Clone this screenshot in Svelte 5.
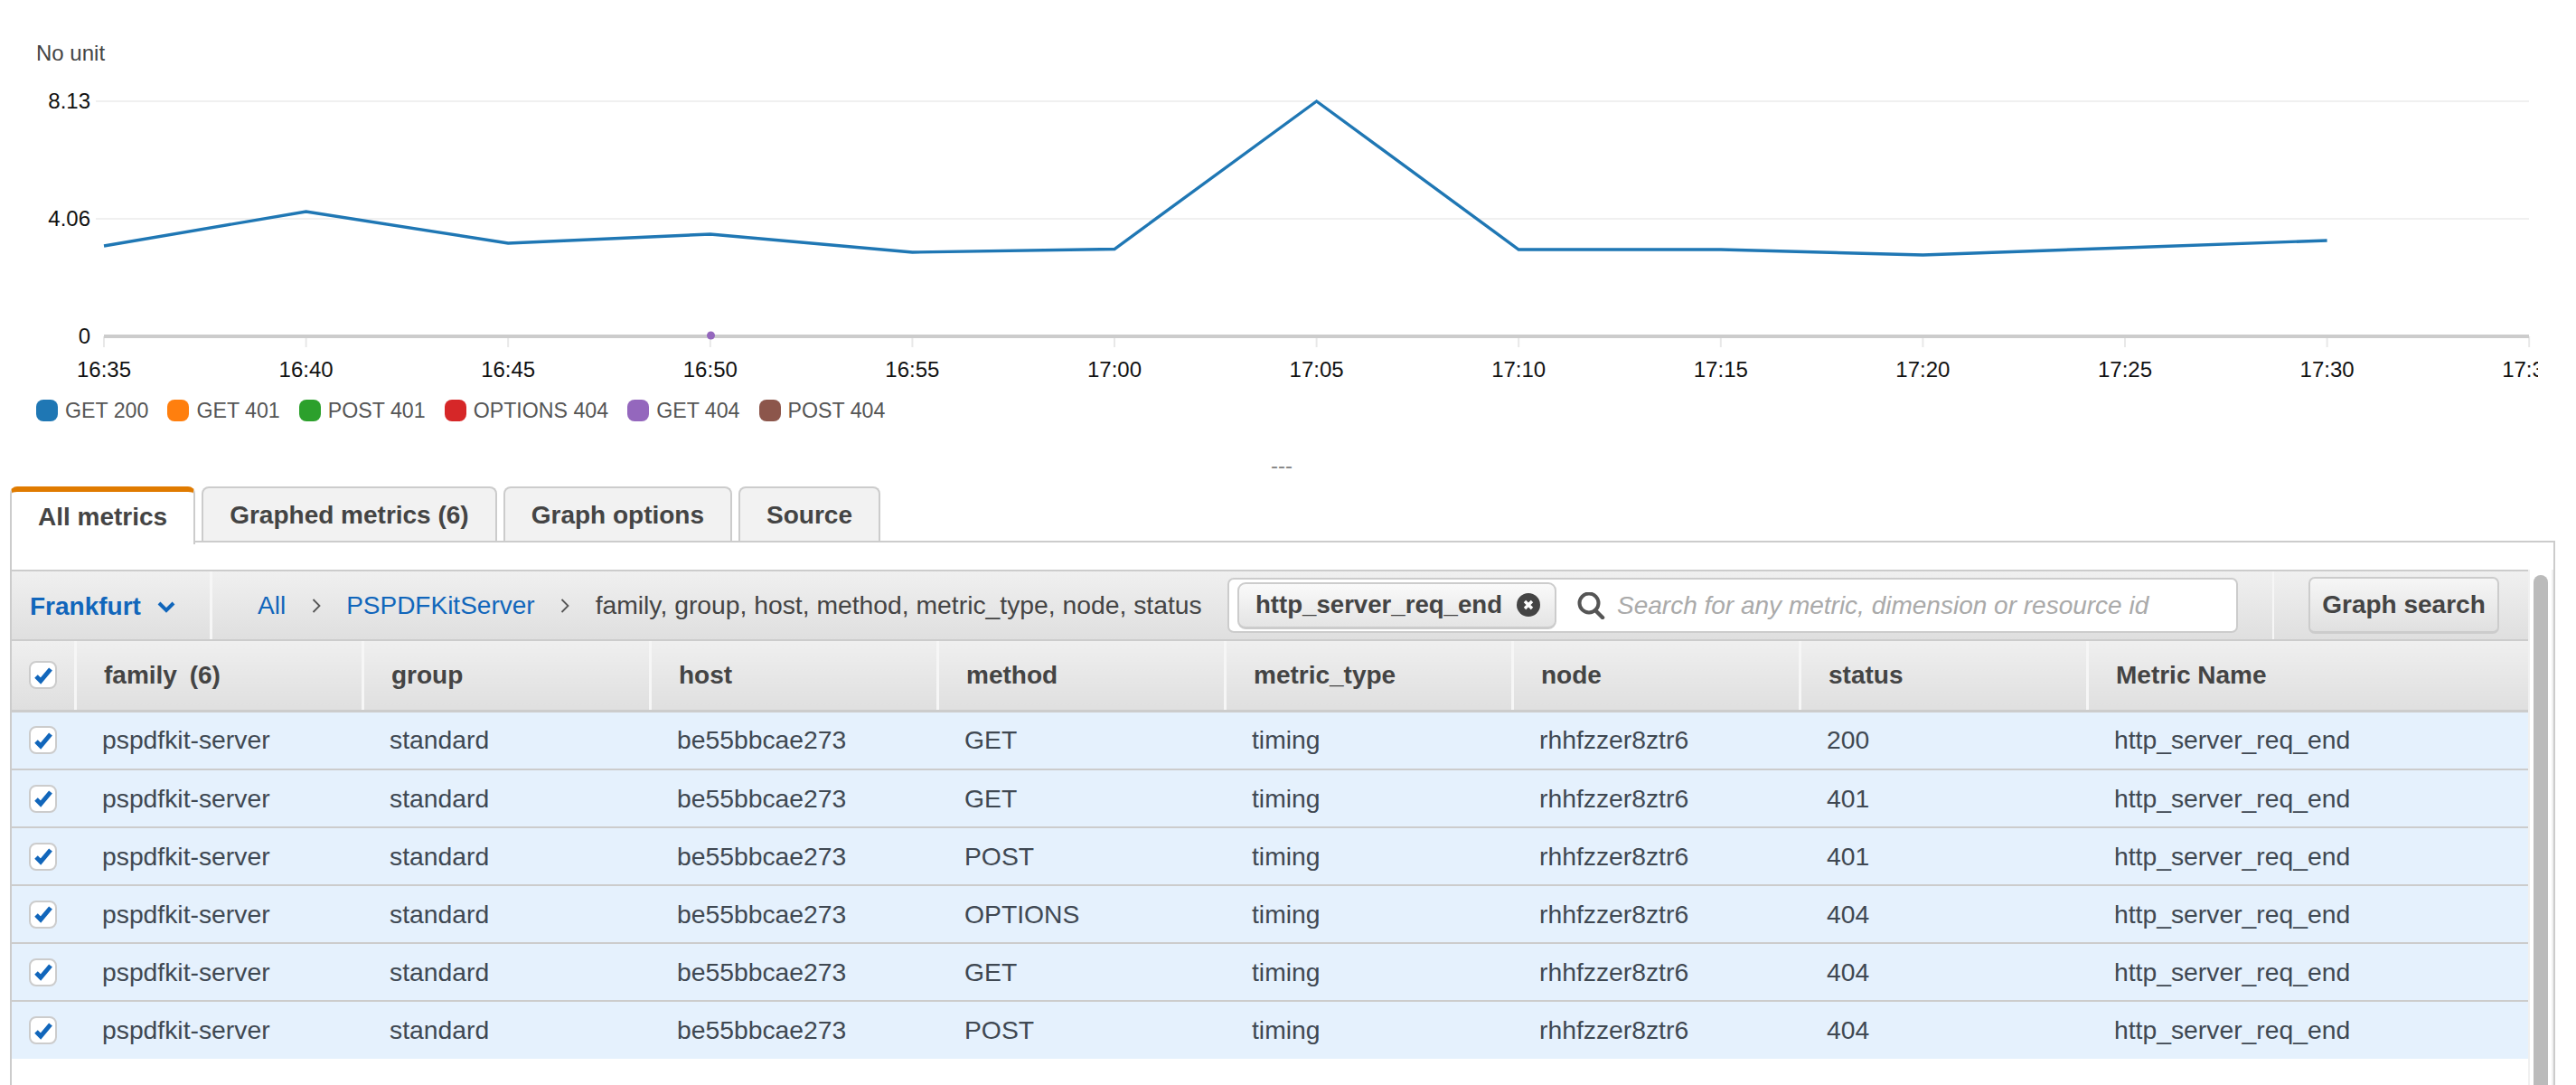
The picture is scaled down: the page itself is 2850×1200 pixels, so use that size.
<script>
	const points = [272, 234, 269, 259, 279, 275.5, 112, 276, 276, 282, 274, 266];
	const step = 223.6;
	const x0 = 115;
	const ticks = ['16:35', '16:40', '16:45', '16:50', '16:55', '17:00', '17:05', '17:10', '17:15', '17:20', '17:25', '17:30', '17:35'];
	const line = points.map((y, i) => `${x0 + i * step},${y}`).join(' ');

	const legend = [
		{ label: 'GET 200', color: '#1f77b4' },
		{ label: 'GET 401', color: '#ff7f0e' },
		{ label: 'POST 401', color: '#2ca02c' },
		{ label: 'OPTIONS 404', color: '#d62728' },
		{ label: 'GET 404', color: '#9467bd' },
		{ label: 'POST 404', color: '#8c564b' }
	];

	const tabs = ['All metrics', 'Graphed metrics (6)', 'Graph options', 'Source'];
	const columns = ['group', 'host', 'method', 'metric_type', 'node', 'status', 'Metric Name'];

	const rows = [
		['GET', '200'],
		['GET', '401'],
		['POST', '401'],
		['OPTIONS', '404'],
		['GET', '404'],
		['POST', '404']
	];
</script>

<div class="page">
	<svg class="chart" width="2808" height="430" viewBox="0 0 2808 430">
		<text class="unit" x="40" y="67">No unit</text>

		<line class="grid" x1="106" y1="112" x2="2798" y2="112" />
		<line class="grid" x1="106" y1="242" x2="2798" y2="242" />
		<text class="label" x="100" y="120" text-anchor="end">8.13</text>
		<text class="label" x="100" y="250" text-anchor="end">4.06</text>
		<text class="label" x="100" y="380" text-anchor="end">0</text>

		{#each ticks as tick, i}
			<line class="tick" x1={x0 + i * step} y1="372" x2={x0 + i * step} y2="384" />
			<text class="label" x={x0 + i * step} y="417" text-anchor="middle">{tick}</text>
		{/each}
		<line class="axis" x1="115" y1="372" x2="2798" y2="372" />
		<circle cx="786.5" cy="371" r="4.5" fill="#9467bd" />
		<polyline class="series" points={line} />
	</svg>

	<div class="legend">
		{#each legend as item}
			<div class="legend-item">
				<span class="swatch" style="background: {item.color}"></span>
				{item.label}
			</div>
		{/each}
	</div>

	<div class="handle">---</div>

	<div class="tabs">
		{#each tabs as tab, i}
			<div class="tab" class:active={i === 0}>{tab}</div>
		{/each}
	</div>

	<div class="panel">
		<div class="content">
			<div class="toolbar">
				<div class="region">
					Frankfurt
					<svg width="20" height="14" viewBox="0 0 20 14">
						<path d="M2 3l8 8 8-8" fill="none" stroke="#1166bb" stroke-width="4" />
					</svg>
				</div>
				<div class="crumbs">
					<span class="link">All</span>
					<svg width="10" height="20" viewBox="0 0 10 20">
						<path d="M1.5 3l7 7-7 7" fill="none" stroke="#555" stroke-width="1.8" />
					</svg>
					<span class="link">PSPDFKitServer</span>
					<svg width="10" height="20" viewBox="0 0 10 20">
						<path d="M1.5 3l7 7-7 7" fill="none" stroke="#555" stroke-width="1.8" />
					</svg>
					<span class="dimensions">family, group, host, method, metric_type, node, status</span>
				</div>
				<div class="search">
					<div class="token">
						http_server_req_end
						<svg width="26" height="26" viewBox="0 0 26 26">
							<circle cx="13" cy="13" r="13" fill="#444" />
							<path d="M9 9l8 8M17 9l-8 8" stroke="#fff" stroke-width="3.4" />
						</svg>
					</div>
					<svg class="search-icon" width="31" height="30" viewBox="0 0 31 30">
						<circle cx="13" cy="12" r="10.5" fill="none" stroke="#555" stroke-width="4" />
						<path d="M20 20l8 8" stroke="#555" stroke-width="4.5" stroke-linecap="round" />
					</svg>
					<span class="placeholder">Search for any metric, dimension or resource id</span>
				</div>
				<div class="actions">
					<button class="graph-search">Graph search</button>
				</div>
			</div>

			<table>
				<colgroup>
					<col class="col-check" />
					{#each Array(7) as _}
						<col class="col-data" />
					{/each}
					<col />
				</colgroup>
				<thead>
					<tr>
						<th class="check-cell">
							<span class="check">
								<svg width="22" height="20" viewBox="0 0 22 20">
									<path d="M3 11l5 5 11-13" fill="none" stroke="#1166bb" stroke-width="5" />
								</svg>
							</span>
						</th>
						<th>family <span class="count">(6)</span></th>
						{#each columns as col}
							<th>{col}</th>
						{/each}
					</tr>
				</thead>
				<tbody>
					{#each rows as row}
						<tr>
							<td class="check-cell">
								<span class="check">
									<svg width="22" height="20" viewBox="0 0 22 20">
										<path d="M3 11l5 5 11-13" fill="none" stroke="#1166bb" stroke-width="5" />
									</svg>
								</span>
							</td>
							<td>pspdfkit-server</td>
							<td>standard</td>
							<td>be55bbcae273</td>
							<td>{row[0]}</td>
							<td>timing</td>
							<td>rhhfzzer8ztr6</td>
							<td>{row[1]}</td>
							<td>http_server_req_end</td>
						</tr>
					{/each}
				</tbody>
			</table>
		</div>

		<div class="scrollbar">
			<div class="thumb"></div>
		</div>
	</div>
</div>

<style>
	:global(body) {
		margin: 0;
		background: #fff;
	}

	.page {
		width: 2850px;
		height: 1200px;
		overflow: hidden;
		font-family: 'Liberation Sans', Arial, sans-serif;
		color: #444;
	}

	.chart {
		display: block;
	}

	.unit {
		font-size: 24px;
		fill: #444;
	}

	.label {
		font-size: 24px;
		fill: #111;
	}

	.grid {
		stroke: #f0f0f0;
		stroke-width: 2;
	}

	.tick {
		stroke: #e8e8e8;
		stroke-width: 2;
	}

	.axis {
		stroke: #ccc;
		stroke-width: 4;
	}

	.series {
		fill: none;
		stroke: #1f77b4;
		stroke-width: 3.4;
	}

	.legend {
		display: flex;
		align-items: center;
		gap: 21px;
		height: 48px;
		padding-left: 40px;
		font-size: 23.2px;
		color: #555;
	}

	.legend-item {
		display: flex;
		align-items: center;
		gap: 8px;
	}

	.swatch {
		width: 24px;
		height: 24px;
		border-radius: 8px;
	}

	.handle {
		height: 60px;
		padding-top: 21px;
		box-sizing: border-box;
		text-align: center;
		font-size: 24px;
		line-height: 32px;
		color: #888;
		margin-left: -14px;
	}

	.tabs {
		display: flex;
		gap: 7px;
		height: 62px;
		margin-left: 11px;
	}

	.tab {
		box-sizing: border-box;
		height: 60px;
		padding: 0 29px;
		font-size: 28px;
		font-weight: bold;
		line-height: 59px;
		background: #f2f2f2;
		border: 2px solid #ccc;
		border-bottom: 0;
		border-radius: 8px 8px 0 0;
	}

	.tab.active {
		height: 64px;
		position: relative;
		z-index: 1;
		background: #fff;
		border-top: 6px solid #e07b00;
		border-bottom: 0;
		line-height: 55px;
	}

	.panel {
		box-sizing: border-box;
		display: flex;
		width: 2816px;
		height: 640px;
		margin-left: 11px;
		margin-top: -2px;
		padding-top: 30px;
		border: 2px solid #ccc;
		border-bottom: 0;
	}

	.content {
		width: 2784px;
		flex: none;
	}

	.toolbar {
		box-sizing: border-box;
		display: flex;
		align-items: stretch;
		height: 79px;
		font-size: 28px;
		background: linear-gradient(#f0f0f0, #dfdfdf);
		border-top: 2px solid #ccc;
		border-bottom: 2px solid #ccc;
	}

	.region {
		box-sizing: border-box;
		flex: none;
		display: flex;
		align-items: center;
		gap: 18px;
		width: 222px;
		padding: 2px 0 0 20px;
		font-size: 28px;
		font-weight: bold;
		color: #1166bb;
		border-right: 3px solid #f6f6f6;
	}

	.crumbs {
		display: flex;
		align-items: center;
		gap: 28.5px;
		padding-left: 50px;
		white-space: nowrap;
	}

	.dimensions {
		font-size: 28.3px;
	}

	.search {
		box-sizing: border-box;
		display: flex;
		align-items: center;
		width: 1118px;
		height: 61px;
		align-self: center;
		margin-left: auto;
		padding-left: 9px;
		background: #fff;
		border: 2px solid #ccc;
		border-radius: 7px;
		white-space: nowrap;
	}

	.link {
		color: #1166bb;
	}

	.token {
		box-sizing: border-box;
		display: flex;
		align-items: center;
		gap: 16px;
		height: 52px;
		padding: 0 16px 0 18px;
		font-size: 27.6px;
		font-weight: bold;
		background: linear-gradient(#fafafa, #e4e4e4);
		border: 2px solid #ccc;
		border-bottom-width: 3px;
		border-radius: 9px;
	}

	.search-icon {
		margin-left: 23px;
		margin-right: 13px;
	}

	.placeholder {
		font-size: 28px;
		font-style: italic;
		color: #aaa;
	}

	.actions {
		flex: none;
		box-sizing: border-box;
		display: flex;
		align-items: center;
		width: 283px;
		margin-left: 38px;
		padding-left: 38px;
		border-left: 2px solid #f6f6f6;
	}

	.graph-search {
		box-sizing: border-box;
		width: 211px;
		height: 63px;
		padding: 0;
		font-family: inherit;
		font-size: 28px;
		font-weight: bold;
		color: #444;
		background: linear-gradient(#f6f6f6, #e0e0e0);
		border: 2px solid #ccc;
		border-bottom-width: 3px;
		border-radius: 7px;
	}

	table {
		width: 100%;
		table-layout: fixed;
		border-collapse: collapse;
	}

	.col-check {
		width: 70px;
	}

	.col-data {
		width: 318px;
	}

	th {
		box-sizing: border-box;
		height: 77px;
		padding: 0 0 0 30.5px;
		font-size: 28px;
		font-weight: bold;
		text-align: left;
		color: #444;
		background: linear-gradient(#efefef, #dfdfdf);
		border-bottom: 3px solid #ccc;
		border-left: 3px solid #f6f6f6;
	}

	th.check-cell {
		border-left: 0;
	}

	.count {
		margin-left: 6px;
	}

	td {
		box-sizing: border-box;
		height: 64px;
		padding: 0 0 0 30px;
		font-size: 28.3px;
		color: #3f4852;
		background: #e5f1fd;
		border-bottom: 2px solid #ccc;
	}

	tbody tr:first-child td {
		height: 65px;
	}

	tbody tr:last-child td {
		border-bottom: 0;
	}

	.check-cell {
		padding: 0 0 0 19px;
		line-height: 0;
	}

	.check {
		box-sizing: border-box;
		display: inline-flex;
		align-items: center;
		justify-content: center;
		width: 31px;
		height: 31px;
		background: #fff;
		border: 2px solid #ccc;
		border-radius: 8px;
	}

	.scrollbar {
		flex: 1;
		display: flex;
		justify-content: center;
		padding-top: 6px;
		background: #fff;
		border-left: 2px solid #f0f0f0;
		border-right: 2px solid #f0f0f0;
	}

	.thumb {
		width: 16px;
		height: 800px;
		background: #bbb;
		border-radius: 8px 8px 0 0;
	}
</style>
